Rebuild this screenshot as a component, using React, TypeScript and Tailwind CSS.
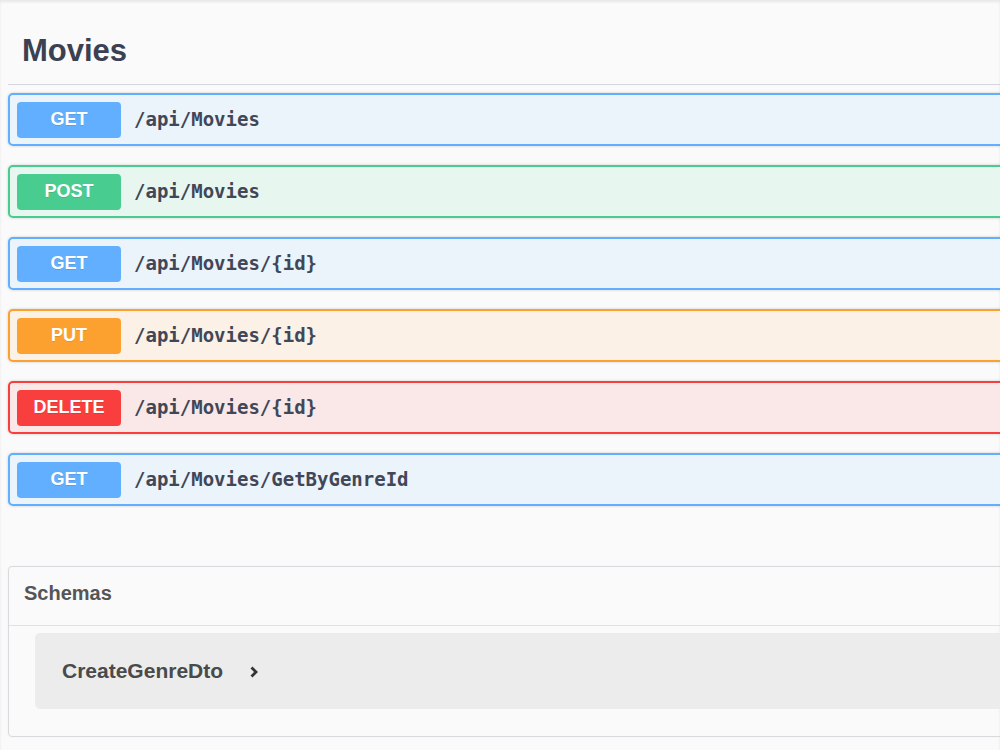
const operations = [
  { method: 'GET', path: '/api/Movies' },
  { method: 'POST', path: '/api/Movies' },
  { method: 'GET', path: '/api/Movies/{id}' },
  { method: 'PUT', path: '/api/Movies/{id}' },
  { method: 'DELETE', path: '/api/Movies/{id}' },
  { method: 'GET', path: '/api/Movies/GetByGenreId' },
];

const methodStyles: Record<string, { block: string; badge: string }> = {
  GET: { block: 'border-[#61affe] bg-[#ebf3fb]', badge: 'bg-[#61affe]' },
  POST: { block: 'border-[#49cc90] bg-[#e8f6f0]', badge: 'bg-[#49cc90]' },
  PUT: { block: 'border-[#fca130] bg-[#fbf1e6]', badge: 'bg-[#fca130]' },
  DELETE: { block: 'border-[#f93e3e] bg-[#fae7e7]', badge: 'bg-[#f93e3e]' },
};

function OperationRow({ method, path }: { method: string; path: string }) {
  const style = methodStyles[method];
  return (
    <div
      className={`flex items-center h-[53px] pl-[7px] border-2 rounded-[5px] shadow-[0_0_3px_rgba(0,0,0,0.19)] ${style.block}`}
    >
      <span
        className={`flex items-center justify-center w-[104px] h-[36px] rounded-[4px] text-white text-[18px] font-bold font-['Liberation_Sans',sans-serif] [text-shadow:0_1px_0_rgba(0,0,0,0.1)] ${style.badge}`}
      >
        {method}
      </span>
      <span className="ml-[13px] text-[19px] font-semibold text-[#414757] font-['DejaVu_Sans_Mono','Liberation_Mono',monospace]">
        {path}
      </span>
    </div>
  );
}

export default function App() {
  return (
    <div className="w-[1000px] h-[750px] overflow-hidden bg-[#fafafa] shadow-[inset_0_2px_3px_rgba(0,0,0,0.08)]">
      <div className="w-[1020px] pl-[8px] pt-[30px]">
        {/* Tag header */}
        <h4 className="pl-[14px] pb-[12px] border-b border-[#d5d7dc] text-[31px] leading-[42px] font-bold text-[#3b4151] font-['Liberation_Sans',sans-serif]">
          Movies
        </h4>

        {/* Operations */}
        <div className="flex flex-col gap-[19px] mt-[8px]">
          {operations.map((op, i) => (
            <OperationRow key={i} method={op.method} path={op.path} />
          ))}
        </div>

        {/* Schemas */}
        <section className="mt-[60px] border border-[#d9dadd] rounded-[4px] shadow-[0_0_2px_rgba(0,0,0,0.06)]">
          <h4 className="h-[59px] pt-[14px] pl-[15px] border-b border-[#dfe1e5] text-[20px] leading-[24px] font-bold text-[#555] font-['Liberation_Sans',sans-serif]">
            Schemas
          </h4>
          <div className="pt-[7px] pb-[27px] pl-[26px]">
            <div className="flex items-center h-[76px] pl-[27px] rounded-[5px] bg-[#ececec]">
              <span className="text-[21px] font-bold text-[#4a4a4a] font-['Liberation_Sans',sans-serif]">
                CreateGenreDto
              </span>
              <svg className="ml-[26px] mt-[2px]" width="10" height="14" viewBox="0 0 10 14">
                <path d="M2.5 2.5 L7 7 L2.5 11.5" fill="none" stroke="#333" strokeWidth="2.8" />
              </svg>
            </div>
          </div>
        </section>
      </div>
    </div>
  );
}
